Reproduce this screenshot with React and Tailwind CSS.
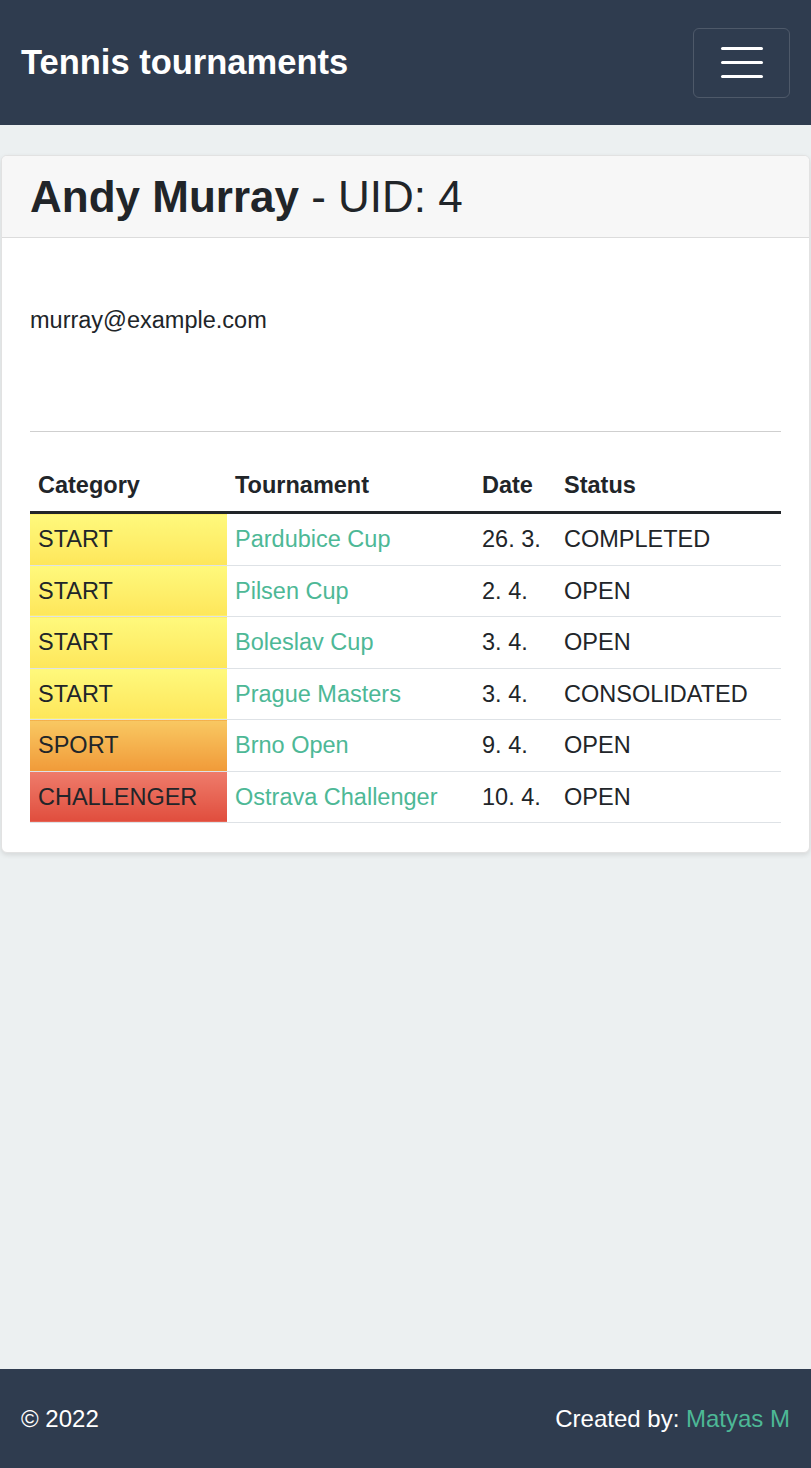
import React from "react";

const rows = [
  { cat: "START", grad: "bg-gradient-to-b from-[#fff97c] to-[#fde65a]", name: "Pardubice Cup", date: "26. 3.", status: "COMPLETED" },
  { cat: "START", grad: "bg-gradient-to-b from-[#fff97c] to-[#fde65a]", name: "Pilsen Cup", date: "2. 4.", status: "OPEN" },
  { cat: "START", grad: "bg-gradient-to-b from-[#fff97c] to-[#fde65a]", name: "Boleslav Cup", date: "3. 4.", status: "OPEN" },
  { cat: "START", grad: "bg-gradient-to-b from-[#fff97c] to-[#fde65a]", name: "Prague Masters", date: "3. 4.", status: "CONSOLIDATED" },
  { cat: "SPORT", grad: "bg-gradient-to-b from-[#f8c862] to-[#f09a38]", name: "Brno Open", date: "9. 4.", status: "OPEN" },
  { cat: "CHALLENGER", grad: "bg-gradient-to-b from-[#ee7b6b] to-[#e04d3d]", name: "Ostrava Challenger", date: "10. 4.", status: "OPEN" },
];

export default function App() {
  return (
    <div
      className="min-h-screen flex flex-col bg-[#ecf0f1] text-[#212529]"
      style={{ fontFamily: '"Liberation Sans", Arial, sans-serif' }}
    >
      <nav className="h-[125px] shrink-0 bg-[#2f3c4f] flex items-center justify-between px-[21px]">
        <span className="text-white font-bold text-[34.5px] leading-none">Tennis tournaments</span>
        <button className="w-[97px] h-[70px] border-[1.5px] border-white/15 rounded-[6px] flex flex-col items-center justify-center gap-[11px]">
          <span className="block w-[42px] h-[3px] bg-white rounded-full" />
          <span className="block w-[42px] h-[3px] bg-white rounded-full" />
          <span className="block w-[42px] h-[3px] bg-white rounded-full" />
        </button>
      </nav>

      <main className="flex-1 pt-[30px] pl-[1px] pr-[1px]">
        <div className="bg-white rounded-[6px] border border-[#e2e2e2] shadow-[0_2px_5px_rgba(0,0,0,0.1)] overflow-hidden">
          <div className="bg-[#f7f7f7] border-b-[1.5px] border-[#dcdcdc] px-[28px] h-[82px] flex items-center">
            <h2 className="text-[44px] leading-none">
              <span className="font-bold">Andy Murray</span>
              <span> - UID: 4</span>
            </h2>
          </div>
          <div className="px-[28px] pt-[64px] pb-[29px]">
            <p className="text-[23.5px] leading-[36px]">murray@example.com</p>
            <hr className="mt-[93px] border-0 border-t-[1.5px] border-[#cfcfcf]" />
            <table className="mt-[28px] w-full border-collapse text-[23.5px] text-left">
              <thead>
                <tr className="border-b-[3px] border-[#212529]">
                  <th className="w-[197px] px-[8px] py-[8px] leading-[35px] font-bold">Category</th>
                  <th className="w-[248px] px-[8px] py-[8px] leading-[35px] font-bold">Tournament</th>
                  <th className="w-[82px] px-[7px] py-[8px] leading-[35px] font-bold">Date</th>
                  <th className="px-[7px] py-[8px] leading-[35px] font-bold">Status</th>
                </tr>
              </thead>
              <tbody>
                {rows.map((r, i) => (
                  <tr key={i} className="border-b-[1.5px] border-[#dee2e6]">
                    <td className={`px-[8px] py-[8px] leading-[34.5px] ${r.grad}`}>{r.cat}</td>
                    <td className="px-[8px] py-[8px] leading-[34.5px] text-[#4db896]">{r.name}</td>
                    <td className="px-[7px] py-[8px] leading-[34.5px] whitespace-nowrap">{r.date}</td>
                    <td className="px-[7px] py-[8px] leading-[34.5px]">{r.status}</td>
                  </tr>
                ))}
              </tbody>
            </table>
          </div>
        </div>
      </main>

      <footer className="h-[99px] shrink-0 mt-[30px] bg-[#2f3c4f] flex items-center justify-between px-[21px] text-white text-[24px]">
        <span>© 2022</span>
        <span>
          Created by: <span className="text-[#4db896]">Matyas M</span>
        </span>
      </footer>
    </div>
  );
}
